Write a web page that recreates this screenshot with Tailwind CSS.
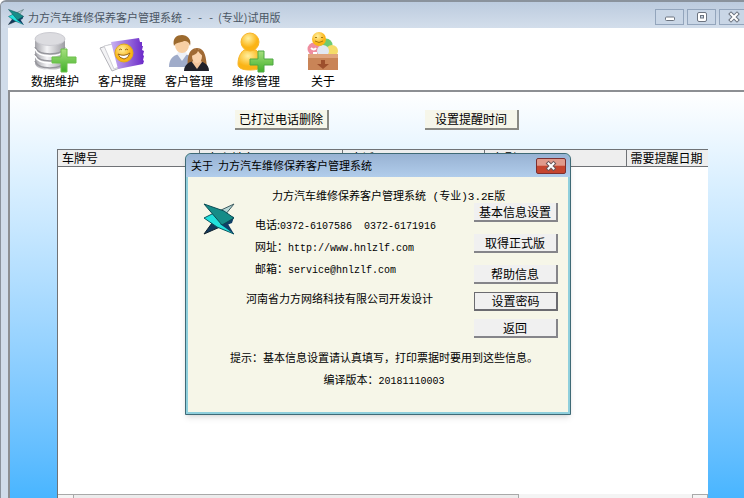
<!DOCTYPE html>
<html lang="zh-CN">
<head>
    <meta charset="UTF-8">
    <meta name="viewport" content="width=device-width, initial-scale=1.0">
    <title>力方汽车维修保养客户管理系统</title>
    <script src="https://cdn.jsdelivr.net/npm/@tailwindcss/browser@4"></script>
</head>
<body class="font-['Noto_Sans_CJK_SC',sans-serif] text-xs text-black">

    <!-- 公用图形 -->
    <svg class="absolute size-0" aria-hidden="true">
        <defs>
            <linearGradient id="silver"><stop offset="0" stop-color="#a3a3a9"/><stop offset=".4" stop-color="#f4f4f6"/><stop offset="1" stop-color="#9c9ca2"/></linearGradient>
            <linearGradient id="green" x2="0" y2="1"><stop offset="0" stop-color="#a6e07e"/><stop offset="1" stop-color="#41b02a"/></linearGradient>
            <linearGradient id="violet"><stop offset="0" stop-color="#c9b3f0"/><stop offset="1" stop-color="#6a28c8"/></linearGradient>
            <radialGradient id="gold" cx=".4" cy=".3"><stop offset="0" stop-color="#fff0a0"/><stop offset="1" stop-color="#fbb416"/></radialGradient>
            <symbol id="logo" viewBox="0 0 32 32">
                <path d="M31 1L16 8l6 4z" fill="#b5d6d4" stroke="#3c5a60"/>
                <path d="M1 31l8-11 8 4z" fill="#123a5e" stroke="#10202c"/>
                <path d="M22 12l9 2-2 6-10 4z" fill="#0f3f66"/>
                <path d="M1 15l10-5 8 10 12 11-17-7z" fill="#22e0dc" stroke="#0a5560"/>
                <path d="M17 21l14 10-6-10z" fill="#0f3f66"/>
                <path d="M1 1l20 7 10 7-12 7z" fill="#168c88" stroke="#0b4c55"/>
            </symbol>
        </defs>
    </svg>

    <!-- 主窗口 -->
    <div class="relative flex flex-col h-screen overflow-hidden rounded-tl-md border-t-2 border-l border-[#8a929c] bg-[#d0dcea]">

        <header class="flex items-center h-[26px] shrink-0 pl-[7px] pt-1 bg-linear-to-b from-[#bccbde] to-[#d3deeb]">
            <svg class="size-4 shrink-0" viewBox="0 0 32 32">
                <use href="#logo"/>
            </svg>
            <h1 class="ml-1 text-[11px] text-[#4a5563] whitespace-nowrap">力方汽车维修保养客户管理系统&nbsp; -&nbsp; &nbsp;-&nbsp; &nbsp;-&nbsp; (专业)试用版</h1>
            <div class="flex gap-[3px] ml-auto -mr-1">
                <button type="button" aria-label="最小化" class="flex items-center justify-center w-[29px] h-4 border border-[#93a5bc] bg-[#c9d6e6]">
                    <svg class="w-3 h-3" viewBox="0 0 12 12"><rect x="1.5" y="6" width="9" height="3.5" rx="1" fill="#fff" stroke="#6c7480"/></svg>
                </button>
                <button type="button" aria-label="最大化" class="flex items-center justify-center w-[29px] h-4 border border-[#93a5bc] bg-[#c9d6e6]">
                    <svg class="w-3 h-3" viewBox="0 0 12 12"><rect x="1.5" y="1.5" width="9" height="9" rx="1.5" fill="#fff" stroke="#6c7480"/><rect x="4.5" y="4.5" width="3" height="2.5" fill="#c9d6e6" stroke="#6c7480"/></svg>
                </button>
                <button type="button" aria-label="关闭" class="flex items-center justify-center w-[29px] h-4 border border-[#93a5bc] bg-[#c9d6e6]">
                    <svg class="w-3 h-3" viewBox="0 0 12 12"><path d="M3 3l6 6M9 3l-6 6" stroke="#6c7480" stroke-width="4" stroke-linecap="square"/><path d="M3 3l6 6M9 3l-6 6" stroke="#fff" stroke-width="2" stroke-linecap="square"/></svg>
                </button>
            </div>
        </header>

        <div class="flex flex-col flex-1 ml-[7px] min-h-0">
            <!-- 工具栏 -->
            <nav class="flex gap-[19px] h-[62px] shrink-0 pl-[23px] pt-[3px] bg-white">
                <button type="button" class="flex flex-col items-center w-12">
                    <svg class="w-12 h-[42px] shrink-0" viewBox="0 0 48 42">
                        <path d="M4 8v24c0 4 6 7 15 7s15-3 15-7V8z" fill="url(#silver)"/>
                        <path d="M4 16c2 5 8 7 15 7s13-2 15-7M4 23c2 5 8 7 15 7s13-2 15-7M4 30c2 5 8 7 15 7s13-2 15-7" fill="none" stroke="#96969c" stroke-width="1.5"/>
                        <path d="M4 18c2 5 8 7 15 7s13-2 15-7M4 25c2 5 8 7 15 7s13-2 15-7" fill="none" stroke="#fff" stroke-width="1.5"/>
                        <ellipse cx="19" cy="8" rx="15" ry="6.5" fill="#dcdce0" stroke="#cbcbd1"/>
                        <path d="M30 18h6v8h9v6h-9v9h-6v-9h-9v-6h9z" fill="url(#green)" stroke="#6cc04a"/>
                    </svg>
                    <span class="leading-4 whitespace-nowrap">数据维护</span>
                </button>
                <button type="button" class="flex flex-col items-center w-12">
                    <svg class="w-12 h-[42px] shrink-0" viewBox="0 0 48 42">
                        <path d="M2 17l12-4 10 23-10 4z" fill="#f3f3f5" stroke="#b4b4ba"/>
                        <path d="M6 15l9-2 8 22-7 3z" fill="#fff" stroke="#cfcfd4"/>
                        <path d="M13 11l28-4 1 4 2 0 0 4 1 0-1 4 2 1-1 4 1 1-1 4 1 1-1 3-25 5z" fill="url(#violet)"/>
                        <circle cx="26" cy="22" r="9" fill="url(#gold)" stroke="#e1ad18"/>
                        <path d="M21 19q2-2 3 0M27 19q2-2 3 0" fill="none" stroke="#9a6511"/>
                        <path d="M20 23q6 3 12-1-2 6-6 6-5-1-6-5z" fill="#fff" stroke="#9a6511"/>
                    </svg>
                    <span class="leading-4 whitespace-nowrap">客户提醒</span>
                </button>
                <button type="button" class="flex flex-col items-center w-12">
                    <svg class="w-12 h-[42px] shrink-0" viewBox="0 0 48 42">
                        <path d="M4 36c0-9 5-13 13-13s13 4 13 13z" fill="#9fabc9"/>
                        <path d="M12 23l5 7 5-7-2-4h-6z" fill="#eef1f8"/>
                        <ellipse cx="17" cy="14" rx="7" ry="8" fill="#f7cfa4"/>
                        <path d="M9 15C7 7 12 4 17 4s10 4 8 11c-1-4-3-5-6-5-4 2-8 1-10 5z" fill="#9c6a2e"/>
                        <path d="M23 35c-1-6 0-18 9-18s9 12 10 18z" fill="#a06a34"/>
                        <path d="M19 40c0-6 5-10 12-10s13 3 13 10z" fill="#22222a"/>
                        <path d="M27 31l5 7 5-7-3-4h-4z" fill="#f3c59c"/>
                        <ellipse cx="32" cy="25" rx="5" ry="7" fill="#fad3ad"/>
                        <path d="M26 25c0-6 4-7 6-7s6 2 6 7c-3-2-4-4-5-5-1 3-4 4-7 5z" fill="#a06a34"/>
                    </svg>
                    <span class="leading-4 whitespace-nowrap">客户管理</span>
                </button>
                <button type="button" class="flex flex-col items-center w-12">
                    <svg class="w-12 h-[42px] shrink-0" viewBox="0 0 48 42">
                        <path d="M6 33c0-7 3-12 6-14h12c4 3 7 8 7 14 0 4-5 6-13 6S6 37 6 33z" fill="url(#gold)" stroke="#f7b52c"/>
                        <circle cx="18" cy="11" r="9" fill="url(#gold)" stroke="#f7b52c"/>
                        <path d="M26 20h6v8h9v6h-9v7h-6v-7h-8v-6h8z" fill="url(#green)" stroke="#4fa845"/>
                    </svg>
                    <span class="leading-4 whitespace-nowrap">维修管理</span>
                </button>
                <button type="button" class="flex flex-col items-center w-12">
                    <svg class="w-12 h-[42px] shrink-0" viewBox="0 0 48 42">
                        <circle cx="15" cy="18" r="6.5" fill="#ef8d9f"/>
                        <circle cx="27" cy="14" r="6.5" fill="#6fca70"/>
                        <circle cx="33" cy="20" r="6" fill="#f5dc69"/>
                        <circle cx="24" cy="20" r="6" fill="#e2e8f2"/>
                        <circle cx="20" cy="8" r="7" fill="url(#gold)"/>
                        <path d="M16 7q1-2 2 0M22 7q1-2 2 0M16 10q4 3 8 0" fill="none" stroke="#a37a13"/>
                        <path d="M12 17q3 3 5 0M14 22h4" fill="none" stroke="#fff" stroke-width="2"/>
                        <path d="M9 23h30v16H9z" fill="#c98457"/>
                        <path d="M9 23h30v4H9z" fill="#dfa47d"/>
                        <path d="M22 29h4v4h4l-6 5-6-5h4z" fill="#9d4f2c"/>
                    </svg>
                    <span class="leading-4 whitespace-nowrap">关于</span>
                </button>
            </nav>

            <main class="flex flex-col flex-1 min-h-0 pt-[18px] border-t-2 border-l-2 border-[#8c8f93] bg-linear-to-b from-white to-[#48b5ff]">
                <div class="flex justify-center gap-24 shrink-0">
                    <button type="button" class="w-[94px] h-5 border-b-2 border-r-2 border-[#8a8a84] bg-[#f6f6ea] leading-none whitespace-nowrap">已打过电话删除</button>
                    <button type="button" class="w-[94px] h-5 border-b-2 border-r-2 border-[#8a8a84] bg-[#f6f6ea] leading-none whitespace-nowrap">设置提醒时间</button>
                </div>

                <div class="flex flex-col flex-1 min-h-0 mt-[19px] ml-[47px] mr-9 border-t border-l border-[#6f7276] bg-white">
                    <table class="w-full table-fixed border-collapse bg-[#eeeeee] text-left">
                        <thead>
                            <tr class="h-4 border-b border-[#6f7276] leading-[15px] whitespace-nowrap">
                                <th class="w-[141px] pl-1 border-r border-[#6f7276] font-normal">车牌号</th>
                                <th class="w-[143px] pl-2 border-r border-[#6f7276] font-normal">车主姓名</th>
                                <th class="w-[142px] pl-2 border-r border-[#6f7276] font-normal">电话</th>
                                <th class="w-[142px] pl-2 border-r border-[#6f7276] font-normal">车型</th>
                                <th class="pl-1 font-normal">需要提醒日期</th>
                            </tr>
                        </thead>
                    </table>
                    <!-- 横向滚动条 -->
                    <div class="flex h-1 mt-auto shrink-0 bg-[#f4f4f4]">
                        <div class="w-4 border-t border-r border-[#a9a9a9] bg-[#f4f4f4]"></div>
                        <div class="w-[445px] border-t border-r border-[#a9a9a9] bg-[#ececec]"></div>
                        <div class="w-4 ml-auto border-t border-x border-[#a9a9a9]"></div>
                    </div>
                </div>
            </main>
        </div>

        <!-- 关于对话框 -->
        <section role="dialog" aria-labelledby="dialog-title" class="absolute left-[184px] top-[151px] w-[386px] rounded-t-md border border-[#3f6a76] bg-[#8fcfdc] shadow-md">
            <header class="flex items-center h-[23px] pl-[5px] pr-1 rounded-t-md bg-linear-to-b from-[#98b2d3] to-[#b1cdeb]">
                <h2 id="dialog-title" class="text-[11px] whitespace-nowrap">关于&nbsp; 力方汽车维修保养客户管理系统</h2>
                <button type="button" aria-label="关闭" class="flex items-center justify-center w-[30px] h-4 ml-auto rounded-xs border border-[#7d2f2f] bg-linear-to-b from-[#e09a8c] from-45% to-[#c5452f] to-50%">
                    <svg class="w-3 h-3" viewBox="0 0 12 12"><path d="M3.5 3.5l5 5M8.5 3.5l-5 5" stroke="#6a5558" stroke-width="4" stroke-linecap="square"/><path d="M3.5 3.5l5 5M8.5 3.5l-5 5" stroke="#fff" stroke-width="2" stroke-linecap="square"/></svg>
                </button>
            </header>

            <div class="mx-0.5 mb-0.5 pt-3 pb-[22px] bg-[#f6f6e8] text-[11px] whitespace-nowrap">
                <p class="pl-[84px] leading-3">力方汽车维修保养客户管理系统<span class="font-['Liberation_Mono',monospace] leading-none">&nbsp;(</span>专业<span class="font-['Liberation_Mono',monospace] leading-none">)3.2E</span>版</p>
                <div class="flex pl-[15px] pr-[10px]">
                    <svg class="size-8 shrink-0" viewBox="0 0 32 32">
                        <use href="#logo"/>
                    </svg>
                    <div class="ml-[11px] pt-[10px] leading-[22px]">
                        <p class="pl-[9px]">电话:<span class="font-['Liberation_Mono',monospace] text-[10px] leading-none">0372-6107586&nbsp; 0372-6171916</span></p>
                        <p class="pl-[9px]">网址：<a href="http://www.hnlzlf.com" class="font-['Liberation_Mono',monospace] text-[10px] leading-none">http://www.hnlzlf.com</a></p>
                        <p class="pl-[9px]">邮箱：<a href="mailto:service@hnlzlf.com" class="font-['Liberation_Mono',monospace] text-[10px] leading-none">service@hnlzlf.com</a></p>
                        <p class="mt-2">河南省力方网络科技有限公司开发设计</p>
                    </div>
                    <div class="flex flex-col w-[84px] ml-auto text-xs">
                        <div class="flex flex-col gap-3">
                            <button type="button" class="h-[19px] border-b-2 border-r-2 border-[#85858a] bg-[#f0f0f0] leading-none">基本信息设置</button>
                            <button type="button" class="h-[19px] border-b-2 border-r-2 border-[#85858a] bg-[#f0f0f0] leading-none">取得正式版</button>
                            <button type="button" class="h-[19px] border-b-2 border-r-2 border-[#85858a] bg-[#f0f0f0] leading-none">帮助信息</button>
                        </div>
                        <div class="flex flex-col gap-2 mt-2">
                            <button type="button" class="h-[19px] border border-b-2 border-r-2 border-[#6b6b70] bg-[#f0f0f0] leading-none">设置密码</button>
                            <button type="button" class="h-[19px] border-b-2 border-r-2 border-[#85858a] bg-[#f0f0f0] leading-none">返回</button>
                        </div>
                    </div>
                </div>
                <div class="mt-2 pl-3 text-center leading-[22px]">
                    <p>提示：基本信息设置请认真填写，打印票据时要用到这些信息。</p>
                    <p>编译版本：<span class="font-['Liberation_Mono',monospace] text-[10px] leading-none">20181110003</span></p>
                </div>
            </div>
        </section>
    </div>

</body>
</html>
